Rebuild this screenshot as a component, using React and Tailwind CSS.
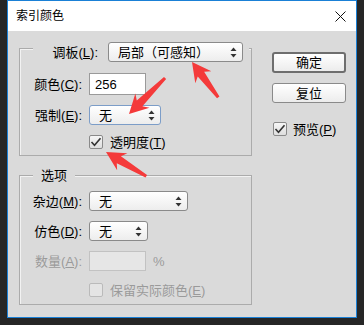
import React from 'react'

const FONT = { fontFamily: '"Liberation Sans", "Noto Sans CJK SC", sans-serif' }

function Arrows() {
  return (
    <svg className="absolute inset-0 pointer-events-none" width="364" height="325">
      <Arrow x={192} y={62} angle={-126.6} len={44} />
      <Arrow x={129} y={114} angle={135} len={51} />
      <Arrow x={106} y={152} angle={-149} len={47} />
    </svg>
  )
}

function Arrow({ x, y, angle, len }) {
  const pts = `0,0 -19,-10 -15,-4 -${len},-1.5 -${len},1.5 -15,4 -19,10`
  return <polygon points={pts} fill="#f43a3a" transform={`translate(${x} ${y}) rotate(${angle})`} />
}

function UpDown() {
  return (
    <svg width="7" height="11" viewBox="0 0 7 11">
      <path d="M3.5 0.5 L6.5 4 L0.5 4 Z" fill="#333" />
      <path d="M3.5 10.5 L6.5 7 L0.5 7 Z" fill="#333" />
    </svg>
  )
}

function Select({ w, text, focus }) {
  return (
    <div
      className={`flex items-center justify-between h-[20px] rounded-[3px] border bg-linear-to-b from-white to-[#ededed] pl-[9px] pr-[5px] text-[13px] text-black ${focus ? 'border-[#7c9dc8]' : 'border-[#8a8a8a]'}`}
      style={{ width: w }}
    >
      <span className="leading-none">{text}</span>
      <UpDown />
    </div>
  )
}

function Check({ checked, disabled }) {
  return (
    <div className={`w-[14px] h-[14px] rounded-[2px] border flex items-center justify-center ${disabled ? 'border-[#bababa] bg-[#e4e4e4]' : 'border-[#8a8a8a] bg-linear-to-b from-[#f6f6f6] to-[#dedede]'}`}>
      {checked && (
        <svg width="12" height="10" viewBox="0 0 12 10">
          <path d="M1.5 5 L4.5 8.2 L10.5 1.2" fill="none" stroke="#333" strokeWidth="1.6" />
        </svg>
      )}
    </div>
  )
}

function Label({ name, k, disabled, w = 62 }) {
  return (
    <div className={`text-right text-[13px] leading-none ${disabled ? 'text-[#9a9a9a]' : 'text-black'}`} style={{ width: w }}>
      {name}(<span className="underline">{k}</span>):
    </div>
  )
}

function Row({ children, className = '' }) {
  return <div className={`flex items-center gap-[7px] ${className}`}>{children}</div>
}

export default function App() {
  return (
    <div className="relative w-[364px] h-[325px] bg-[#262626] overflow-hidden" style={FONT}>
      <div className="ml-[7px] w-[350px] h-[318px] border border-[#1a80d6] bg-[#dadada] flex flex-col">
        <div className="h-[30px] bg-white flex items-center justify-between pl-[8px] pr-[10px]">
          <span className="text-[12px] text-black">索引颜色</span>
          <svg width="11" height="11" viewBox="0 0 11 11">
            <path d="M0.5 0.5 L10.5 10.5 M10.5 0.5 L0.5 10.5" stroke="#111" strokeWidth="1" />
          </svg>
        </div>

        <div className="flex pl-[11px] pt-[17px]">
          <div className="w-[233px] flex flex-col">
            <div className="border border-[#ababab] shadow-[inset_1px_1px_0_#f2f2f2] pb-[6px]">
              <div className="-mt-[7px] ml-[13px] w-[216px] h-[20px] bg-[#dadada] flex items-center gap-[10px]">
                <Label name="调板" k="L" w={65} />
                <Select w={135} text="局部（可感知）" />
              </div>
              <Row className="mt-[11px] pl-0">
                <Label name="颜色" k="C" />
                <div className="w-[57px] h-[22px] bg-white border border-[#9a9a9a] flex items-center pl-[5px] text-[13px] leading-none">256</div>
              </Row>
              <Row className="mt-[10px]">
                <Label name="强制" k="E" />
                <Select w={72} text="无" focus />
              </Row>
              <div className="mt-[10px] ml-[69px] flex items-center gap-[7px] h-[14px]">
                <Check checked />
                <span className="text-[13px] leading-none">透明度(<span className="underline">T</span>)</span>
              </div>
            </div>

            <div className="mt-[19px] border border-[#ababab] shadow-[inset_1px_1px_0_#f2f2f2] pb-[7px]">
              <div className="-mt-[9px] ml-[13px] w-fit h-[16px] bg-[#dadada] px-[8px] flex items-center text-[13px] leading-none">选项</div>
              <Row className="mt-[8px]">
                <Label name="杂边" k="M" />
                <Select w={99} text="无" />
              </Row>
              <Row className="mt-[10px]">
                <Label name="仿色" k="D" />
                <Select w={59} text="无" />
              </Row>
              <Row className="mt-[10px]">
                <Label name="数量" k="A" disabled />
                <div className="w-[57px] h-[20px] bg-[#e6e6e6] border border-[#c2c2c2]" />
                <span className="text-[13px] leading-none text-[#9a9a9a]">%</span>
              </Row>
              <div className="mt-[12px] ml-[69px] flex items-center gap-[7px] h-[14px]">
                <Check disabled />
                <span className="text-[13px] leading-none text-[#9a9a9a]">保留实际颜色(<span className="underline">E</span>)</span>
              </div>
            </div>
          </div>

          <div className="ml-[20px] mt-[4px] flex flex-col">
            <button className="w-[74px] h-[21px] border-2 border-[#6e6e6e] rounded-[3px] bg-linear-to-b from-white to-[#ececec] text-[13px] leading-none">确定</button>
            <button className="mt-[10px] w-[74px] h-[20px] border border-[#8a8a8a] rounded-[3px] bg-linear-to-b from-white to-[#ececec] text-[13px] leading-none">复位</button>
            <div className="mt-[19px] ml-[1px] flex items-center gap-[6px]">
              <Check checked />
              <span className="text-[13px] leading-none">预览(<span className="underline">P</span>)</span>
            </div>
          </div>
        </div>
      </div>
      <Arrows />
    </div>
  )
}
